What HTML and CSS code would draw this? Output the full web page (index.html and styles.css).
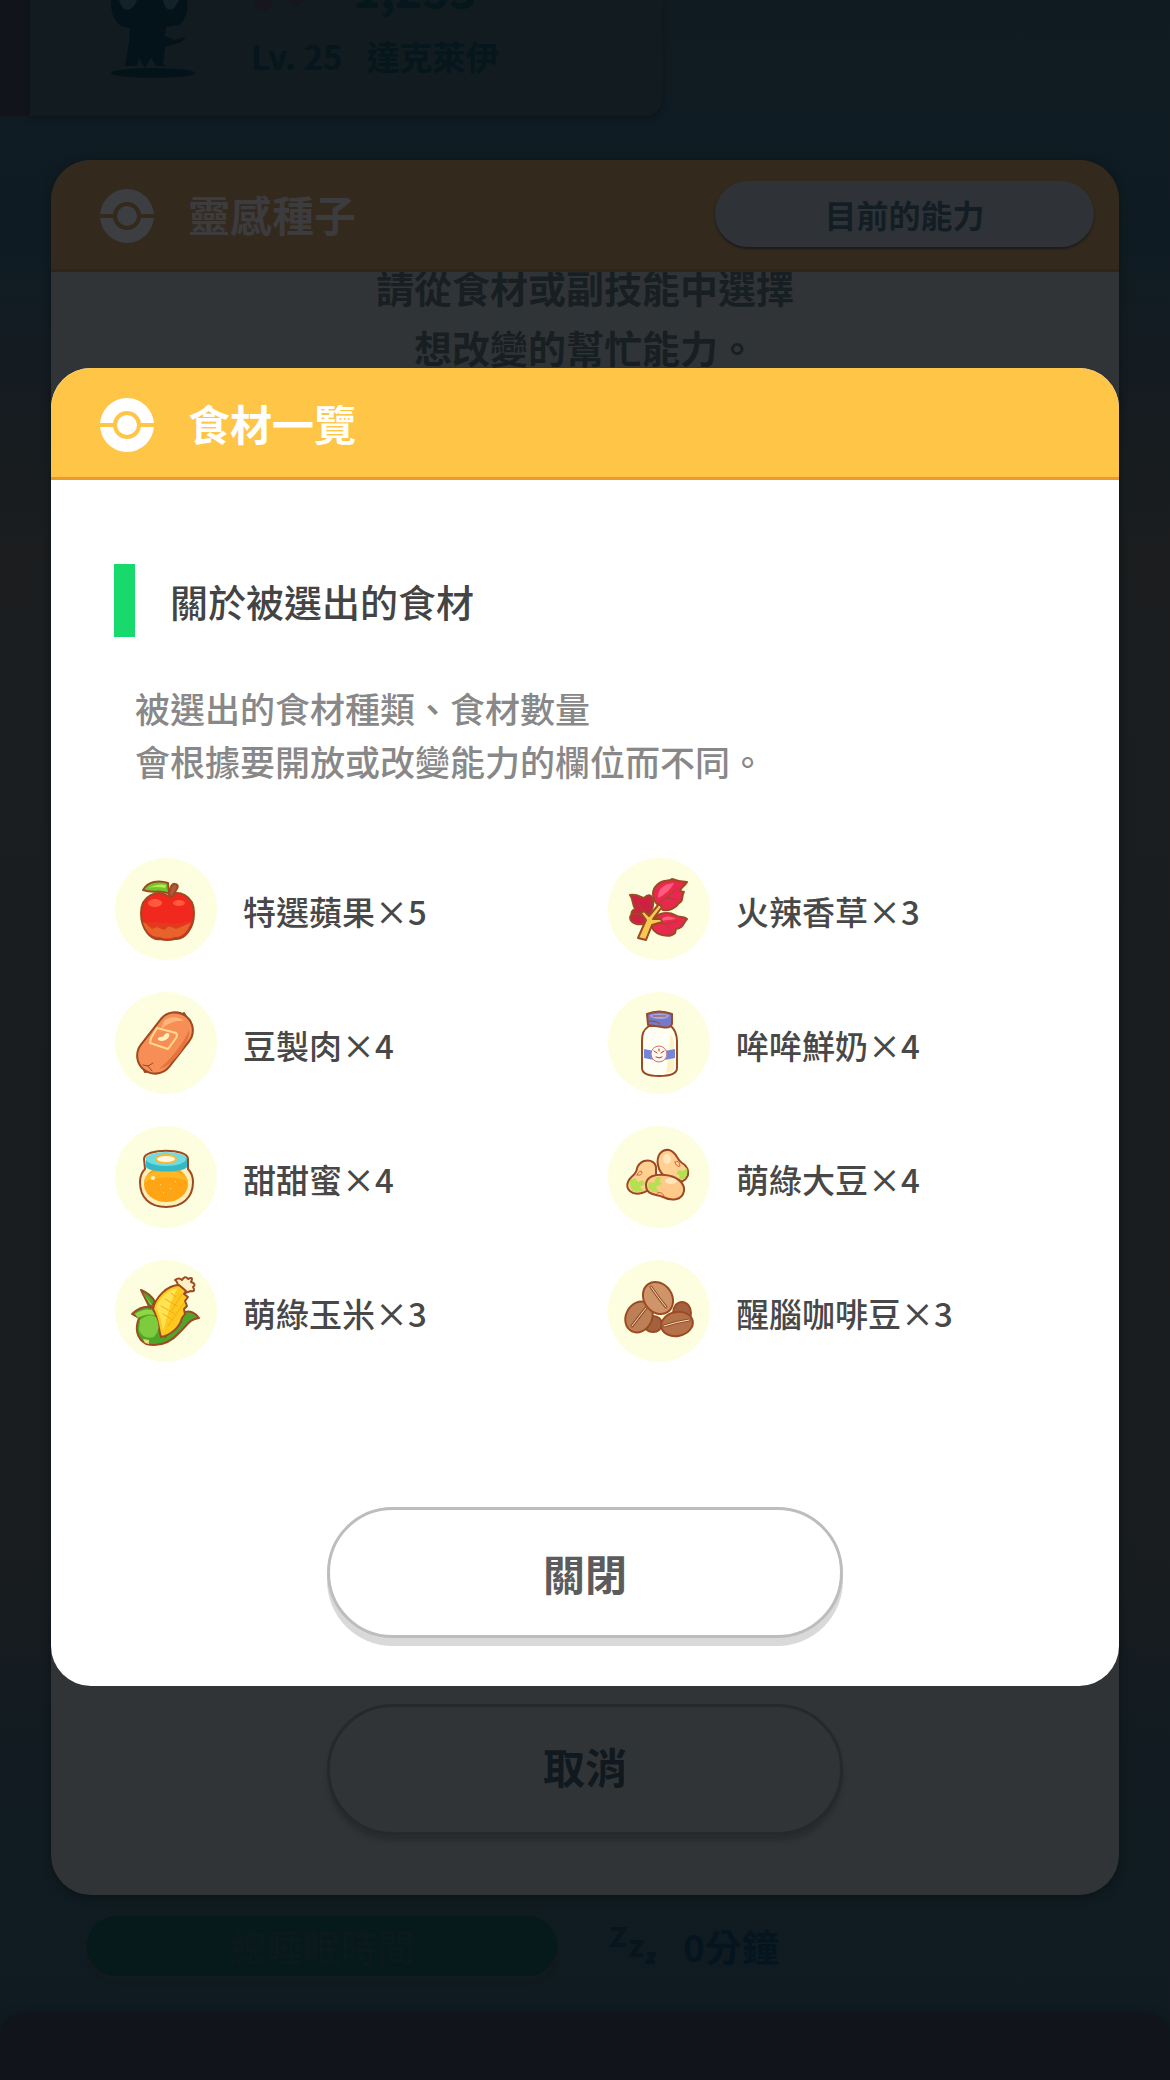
FILE: index.html
```html
<!DOCTYPE html>
<html lang="zh-Hant">
<head>
    <meta charset="UTF-8">
    <meta name="viewport" content="width=device-width, initial-scale=1.0">
    <title>食材一覽</title>
    <link rel="stylesheet" href="styles.css">
</head>
<body>
    <!-- page behind the dialogs -->
    <main class="page">
        <section class="profile">
            <svg class="avatar" viewBox="0 0 100 90" aria-hidden="true">
                <path d="M8 0H84C86 12 82 20 76 25L63 27 62 36 72 40 83 37 78 42 62 47 60 64 64 66H53L48 58 42 68 36 58 34 66H22L26 42 27 28 18 26C10 20 8 12 8 0Z"/>
                <path d="M16 0C20 14 30 12 34 0ZM60 0C62 12 70 14 76 0Z" fill="#132128"/>
                <ellipse cx="50" cy="73" rx="42" ry="5"/>
            </svg>
            <div class="profile-info">
                <div class="score">
                    <svg width="60" height="48" viewBox="0 0 60 48" aria-hidden="true">
                        <circle cx="12" cy="38" r="9"/>
                        <path d="M46 43L57 33 54 30H38L35 33Z"/>
                    </svg>
                    <span>1,253</span>
                </div>
                <div class="level"><span>Lv. 25</span><span>達克萊伊</span></div>
            </div>
        </section>
        <section class="sleep">
            <span class="sleep-label">總睡眠時間</span>
            <svg width="48" height="40" viewBox="0 0 48 40" aria-hidden="true">
                <path d="M3 3H16L5 19H18M22 16H33L24 29H35M39 28H46L40 36H47"/>
            </svg>
            <span class="sleep-time">0分鐘</span>
        </section>
        <div class="bottom-panel"></div>
    </main>

    <div class="overlay">
        <section class="dialog dialog-back">
            <header class="dialog-header">
                <svg class="ball" viewBox="0 0 54 54" aria-hidden="true">
                    <circle cx="27" cy="27" r="27"/>
                    <path class="gap" d="M0 27H14M40 27H54"/>
                    <circle class="gap" cx="27" cy="27" r="12"/>
                </svg>
                <h2>靈感種子</h2>
                <button class="ability-btn" type="button">目前的能力</button>
            </header>
            <div class="message">
                <p>請從食材或副技能中選擇<br>想改變的幫忙能力。</p>
            </div>
            <button class="round-btn" type="button">取消</button>
        </section>
    </div>

    <div class="overlay">
        <section class="dialog dialog-front" role="dialog" aria-labelledby="dialog-title">
            <header class="dialog-header">
                <svg class="ball" viewBox="0 0 54 54" aria-hidden="true">
                    <circle cx="27" cy="27" r="27"/>
                    <path class="gap" d="M0 27H14M40 27H54"/>
                    <circle class="gap" cx="27" cy="27" r="12"/>
                </svg>
                <h1 id="dialog-title">食材一覽</h1>
            </header>
            <div class="content">
                <h2 class="section-title">關於被選出的食材</h2>
                <p class="note">被選出的食材種類、食材數量<br>會根據要開放或改變能力的欄位而不同。</p>
                <ul class="foods">
                    <li>
                        <svg class="food" viewBox="0 0 102 102" aria-hidden="true">
                            <path d="M53 38C43 31 26 37 26 55C26 71 36 83 45 81Q52 83 60 81C70 82 79 70 79 55C79 37 63 31 53 38Z" fill="#f0281d"/>
                            <path class="plain" d="M28 64Q40 70 52 68Q66 71 76 64C73 74 66 80 60 79Q52 82 45 79C37 80 30 73 28 64Z" fill="#e8622c"/>
                            <path class="plain" d="M29 64L37 71 42 69 49 72 54 68 61 71 68 68 76 62Q66 66 52 65Z" fill="#e23a1f"/>
                            <ellipse class="plain" cx="40" cy="45" rx="7" ry="4" fill="#ff5a3c"/>
                            <ellipse class="plain" cx="64" cy="45" rx="6" ry="3" fill="#ff5a3c"/>
                            <path d="M54 38C54 31 57 25 60 26C65 27 62 31 60 34L57 39Z" fill="#b05a3a"/>
                            <path d="M28 32C33 23 44 22 53 25L54 36C46 31 38 36 28 32Z" fill="#74c52c"/>
                            <path class="plain" d="M33 30Q42 25 51 27L50 30Q41 28 33 30Z" fill="#b2ec5a"/>
                        </svg>
                        <span>特選蘋果×5</span>
                    </li>
                    <li>
                        <svg class="food" viewBox="0 0 102 102" aria-hidden="true">
                            <path d="M50 47C43 40 44 31 49 27C54 21 60 24 64 21Q71 24 79 24C77 28 72 30 72 33L76 34C73 38 76 43 71 45C68 50 61 53 55 52Z" fill="#e9284f"/>
                            <path d="M34 58C22 61 21 54 27 51C24 45 25 40 22 37C30 36 34 40 36 40Q40 36 43 38C48 44 44 55 38 60Z" fill="#cf1f43"/>
                            <path d="M36 66C24 68 19 60 24 56C30 54 36 58 38 62Z" fill="#cf1f43"/>
                            <path d="M44 64C48 53 62 54 67 57C72 60 76 58 79 61C75 65 76 70 68 71L67 75C62 80 49 78 44 70Z" fill="#e9284f"/>
                            <path class="plain" d="M50 40C50 30 56 26 66 25C62 32 58 36 50 40ZM52 63C56 57 63 58 68 61Z" fill="#ff5c7c"/>
                            <path class="thin" d="M52 44Q62 38 70 30M58 40L70 42M30 44L35 55M53 66Q62 66 70 63M58 66L62 72"/>
                            <path d="M30 80L38 62 33 55 36 53 41 58 51 46 54 49 45 61 53 61 54 64 44 67 38 82Z" fill="#f7c752"/>
                        </svg>
                        <span>火辣香草×3</span>
                    </li>
                    <li>
                        <svg class="food" viewBox="0 0 102 102" aria-hidden="true">
                            <path d="M65 25L69 21 73 28ZM27 74L30 80 37 79Z" fill="#ef824a"/>
                            <rect x="-18" y="-34" width="36" height="68" rx="18" transform="translate(50 51) rotate(38)" fill="#f68e55"/>
                            <path class="plain" d="M49 29C54 24 64 24 69 29C60 28 54 31 46 37Z" fill="#ffb57c"/>
                            <path class="plain" d="M74 38C76 50 57 75 44 77C53 70 68 53 74 38Z" fill="#e6733d"/>
                            <path d="M42 36L61 41Q63 43 61 46L53 57 35 51 36 46Z" style="stroke:#ffd98c" fill="#f68e55"/>
                            <path class="plain" d="M52 41C57 41 54 49 46 49C40 48 44 44 48 45Q49 42 52 41Z" fill="#fff3c0"/>
                            <path class="thin" d="M28 73L33 74 38 71M33 74L37 79"/>
                        </svg>
                        <span>豆製肉×4</span>
                    </li>
                    <li>
                        <svg class="food" viewBox="0 0 102 102" aria-hidden="true">
                            <path d="M41 34C35 38 34 42 34 49V76Q34 84 51 84Q69 84 69 76V49C69 42 67 38 63 34Z" fill="#fffef2"/>
                            <path class="plain" d="M62 42Q66 45 66 54V78Q62 81 58 81Q62 60 62 42Z" fill="#fff1c6"/>
                            <path class="plain" d="M36 57Q51 61 67 57V66Q51 70 36 66Z" fill="#7187dc"/>
                            <path d="M39 22Q51 17 64 22V32Q62 37 54 35L40 33Z" fill="#7479c9"/>
                            <path class="plain" d="M42 23Q51 20 61 23Q61 27 52 27Q42 27 42 23Z" fill="#a4a8ea"/>
                            <path class="thin" d="M45 24H58M41 29Q50 29 52 32"/>
                            <circle cx="51" cy="62" r="8" fill="#fff7f0" style="stroke:#d56e6e;stroke-width:1"/>
                            <path class="thin" d="M46 59L49 61M56 59L53 61M48 65Q51 67 54 65M51 57V59"/>
                        </svg>
                        <span>哞哞鮮奶×4</span>
                    </li>
                    <li>
                        <svg class="food" viewBox="0 0 102 102" aria-hidden="true">
                            <path d="M29 33C29 22 73 22 73 33V43C76 46 78 51 78 56C78 72 67 81 51 81C35 81 25 72 25 56C25 50 27 46 30 43Z" fill="#ffefb6"/>
                            <ellipse class="plain" cx="51" cy="58" rx="22" ry="18" fill="#ffa514"/>
                            <path class="plain" d="M29 57C29 48 38 45 51 45C64 45 72 49 73 56C62 49 40 50 29 57Z" fill="#ffb524"/>
                            <path class="plain" d="M31 33C31 25 72 25 72 33V41C69 47 34 47 31 41Z" fill="#35b9c4"/>
                            <ellipse class="plain" cx="51" cy="33" rx="20" ry="7" fill="#6edbe0"/>
                            <ellipse class="plain" cx="51" cy="33" rx="10" ry="4" fill="#fff8dc" style="stroke:#f6b93c;stroke-width:2"/>
                            <circle class="plain" cx="38" cy="52" r="2" fill="#fff6cc"/>
                            <path class="plain" d="M45 58h1v1h-1zM55 62h1v1h-1zM48 66h1v1h-1zM60 55h1v1h-1z" fill="#ffe08a"/>
                        </svg>
                        <span>甜甜蜜×4</span>
                    </li>
                    <li>
                        <svg class="food" viewBox="0 0 102 102" aria-hidden="true">
                            <path d="M36 35C43 33 49 37 48 44C49 53 43 65 34 67C24 70 17 63 20 56C22 50 29 49 29 42Q31 37 36 35Z" fill="#ffd091"/>
                            <path d="M50 39C48 29 54 23 61 24C69 26 68 33 74 37C81 41 83 50 75 55C65 57 52 51 50 39Z" fill="#ffd091"/>
                            <path class="plain" d="M22 54L27 52 30 56 35 54 37 58 32 61 36 65 28 66Q21 65 22 54ZM79 42L75 45 71 44 68 47 72 50 70 54Q81 54 79 42Z" fill="#b4e052"/>
                            <path d="M38 59C38 50 48 48 57 49C69 50 77 57 76 65C74 75 63 75 55 71C49 68 38 70 38 59Z" fill="#ffc98a"/>
                            <path class="plain" d="M48 51L54 51 51 55 54 58 48 61 51 66 45 66Q38 63 41 56L46 57Z" fill="#b4e052"/>
                            <path class="thin" d="M29 49Q32 43 34 46Q34 50 29 49M67 36Q71 33 72 40Q69 42 67 36M49 67Q54 65 56 70" style="stroke:#d8603a"/>
                            <ellipse class="plain" cx="59" cy="33" rx="4" ry="5" fill="#ffe6bb"/>
                            <ellipse class="plain" cx="63" cy="55" rx="6" ry="3" fill="#ffe6bb"/>
                        </svg>
                        <span>萌綠大豆×4</span>
                    </li>
                    <li>
                        <svg class="food" viewBox="0 0 102 102" aria-hidden="true">
                            <path d="M63 27Q63 22 60 20Q64 17 67 20Q70 15 73 19Q79 16 76 22Q82 24 78 27Q81 32 76 31L70 33Z" fill="#fff0c4"/>
                            <path d="M35 48L26 30Q36 34 40 42ZM68 53C75 49 81 54 84 58C74 59 72 66 64 73C56 82 45 87 31 84C21 78 20 68 24 58L17 54Q28 44 39 48L50 77Z" fill="#4fa52a"/>
                            <path d="M38 49C40 38 52 25 64 25L71 31 69 34 73 37 70 41 72 46 69 49 70 54 67 58C65 67 56 75 46 77C43 68 44 60 38 49Z" fill="#ffc81e"/>
                            <path class="plain" d="M41 48C44 39 53 29 63 28C56 38 53 55 48 71Q46 56 41 48Z" fill="#ffe352"/>
                            <path d="M56 33L61 37M50 39L62 46M46 46L60 54M48 54L58 60M67 34L57 50M69 43L53 66" style="stroke:#f5ab18;stroke-width:1" fill="none"/>
                            <path class="plain" d="M25 60Q34 53 41 57Q47 68 39 77Q28 80 24 70Z" fill="#7ecb3e"/>
                            <path class="plain" d="M20 54Q28 48 37 50L40 55Q30 53 23 58ZM28 33L35 44 38 46Z" fill="#8fd544"/>
                            <path class="plain" d="M28 79L34 80 34 84 30 83Z" fill="#d9e070"/>
                        </svg>
                        <span>萌綠玉米×3</span>
                    </li>
                    <li>
                        <svg class="food" viewBox="0 0 102 102" aria-hidden="true">
                            <ellipse cx="74" cy="53" rx="9" ry="11" fill="#a3623f"/>
                            <ellipse cx="45" cy="64" rx="9" ry="8" fill="#a3623f"/>
                            <ellipse cx="31" cy="57" rx="13" ry="16" transform="rotate(28 31 57)" fill="#bd7f56"/>
                            <ellipse cx="50" cy="38" rx="14" ry="17" transform="rotate(-35 50 38)" fill="#cf9468"/>
                            <ellipse cx="69" cy="64" rx="16" ry="12" transform="rotate(-12 69 64)" fill="#b57149"/>
                            <path d="M43 27Q49 36 58 47M24 66Q30 58 38 48M56 66Q68 62 81 60" style="stroke:#8f4d2c;stroke-width:3" fill="none"/>
                            <path d="M43 27Q49 36 58 47M24 66Q30 58 38 48M56 66Q68 62 81 60" style="stroke:#ffe3b0;stroke-width:1" fill="none"/>
                        </svg>
                        <span>醒腦咖啡豆×3</span>
                    </li>
                </ul>
            </div>
            <button class="round-btn" type="button">關閉</button>
        </section>
    </div>
</body>
</html>
```
FILE: styles.css
```css
*{
    margin: 0;
    padding: 0;
    box-sizing: border-box;
}
body{
    position: relative;
    min-height: 100vh;
    overflow-x: hidden;
    background: #101b21;
    font-family: "Noto Sans CJK TC", "Noto Sans", sans-serif;
    font-weight: 500;
    color: #484848;
}
button{
    font-family: inherit;
    cursor: pointer;
}

/* page behind */
.page{
    display: flex;
    flex-direction: column;
    min-height: 100vh;
    background: linear-gradient(#101b21 0%, #0f1b23 12%, #161c20 20%, #1b1d1f 26%, #1a1d1f 74%, #111b21 84%, #101b21 100%);
}
.profile{
    display: flex;
    width: 54%;
    height: 116px;
    margin-left: 30px;
    padding-left: 63px;
    overflow: hidden;
    background: #111b20;
    border-bottom-right-radius: 16px;
    box-shadow: 0 2px 4px #0f141b, -30px 0 0 #12141b;
}
.avatar{
    flex: none;
    width: 120px;
    height: 90px;
    fill: #04131a;
}
.profile-info{
    padding-left: 38px;
    color: #05161d;
}
.score{
    display: flex;
    gap: 42px;
    height: 48px;
    margin-top: -36px;
    font-size: 46px;
    font-weight: bold;
    line-height: 48px;
    fill: #17161c;
}
.level{
    display: flex;
    gap: 24px;
    margin-top: 20px;
    font-size: 33px;
    font-weight: bold;
    line-height: 48px;
}
.sleep{
    display: flex;
    align-items: center;
    gap: 27px;
    margin-top: auto;
    padding: 0 87px 38px;
}
.sleep svg{
    margin-left: 24px;
    fill: none;
    stroke: #06151e;
    stroke-width: 4;
}
.sleep-label{
    width: 470px;
    border-radius: 30px;
    background: #06191b;
    color: #0c1a1b;
    font-size: 37px;
    line-height: 60px;
    text-align: center;
    box-shadow: 0 8px 2px #111a1d;
}
.sleep-time{
    color: #04151f;
    font-size: 37px;
    font-weight: bold;
    line-height: 60px;
}
.bottom-panel{
    height: 66px;
    border-radius: 24px 24px 0 0;
    background: #12141c;
    box-shadow: 0 0 10px #0e141b;
}

/* dialogs */
.overlay{
    position: absolute;
    inset: 0;
    display: flex;
    align-items: center;
    justify-content: center;
    padding: 0 51px 26px;
}
.dialog{
    display: flex;
    flex-direction: column;
    align-items: center;
    width: 100%;
    border-radius: 40px;
    overflow: hidden;
}
.dialog-header{
    display: flex;
    align-items: center;
    gap: 34px;
    width: 100%;
    height: 112px;
    padding: 0 25px 0 49px;
    border-bottom: 3px solid #ec9a2b;
    background: #ffc546;
    color: #fff;
}
.dialog-header h1,
.dialog-header h2{
    font-size: 42px;
    font-weight: bold;
    line-height: 60px;
}
.ball{
    width: 54px;
    height: 54px;
    margin-top: 4px;
    fill: #fff;
}
.ball .gap{
    fill: none;
    stroke: #ffc546;
    stroke-width: 4;
}
.round-btn{
    width: 516px;
    height: 131px;
    border: 3px solid #bdbdbd;
    border-radius: 66px;
    background: #fff;
    box-shadow: 0 8px 0 #d9d9d9;
    color: #5c5c5c;
    font-size: 42px;
    font-weight: bold;
    line-height: 60px;
}

.dialog-back{
    min-height: 1735px;
    padding-bottom: 60px;
    background: #313436;
    box-shadow: 0 2px 8px #0c1517;
}
.dialog-back .dialog-header{
    position: relative;
    background: #33291d;
    border-color: #2b251c;
    color: #3c3b3e;
}
.dialog-back .ball{
    fill: #3c3e41;
}
.dialog-back .ball .gap{
    stroke: #33291d;
}
.ability-btn{
    width: 379px;
    height: 66px;
    margin-left: auto;
    border: none;
    border-radius: 33px;
    background: #2f3338;
    box-shadow: 0 2px 2px #1c1c1c;
    color: #131e24;
    font-size: 32px;
    font-weight: bold;
}
.message{
    flex: 1;
    margin-top: -15px;
    color: #181f23;
    font-size: 38px;
    font-weight: bold;
    line-height: 60px;
    text-align: center;
}
.dialog-back .round-btn{
    padding-bottom: 6px;
    border-color: #25292b;
    background: #313437;
    box-shadow: 0 6px 4px #282c2e;
    color: #10191f;
}

.dialog-front{
    padding-bottom: 48px;
    background: #fff;
}
.content{
    width: 100%;
    padding: 84px 63px 145px;
}
.section-title{
    padding-left: 35px;
    border-left: 21px solid #18d96b;
    color: #444;
    font-size: 38px;
    font-weight: 500;
    line-height: 73px;
}
.note{
    margin-top: 44px;
    padding-left: 21px;
    color: #888;
    font-size: 35px;
    line-height: 53px;
}
.foods{
    display: grid;
    grid-template-columns: 493px 1fr;
    gap: 32px 0;
    margin-top: 71px;
    padding-left: 1px;
    list-style: none;
}
.foods li{
    display: flex;
    align-items: center;
    gap: 26px;
    font-size: 33px;
    line-height: 48px;
}
.foods li span{
    padding-top: 4px;
}
.food{
    flex: none;
    width: 102px;
    height: 102px;
    border-radius: 50%;
    background: #fdfedf;
    stroke: #9c4a24;
    stroke-width: 2;
    stroke-linejoin: round;
    stroke-linecap: round;
}
.food .plain{
    stroke: none;
}
.food .thin{
    fill: none;
    stroke-width: 1;
}
```
